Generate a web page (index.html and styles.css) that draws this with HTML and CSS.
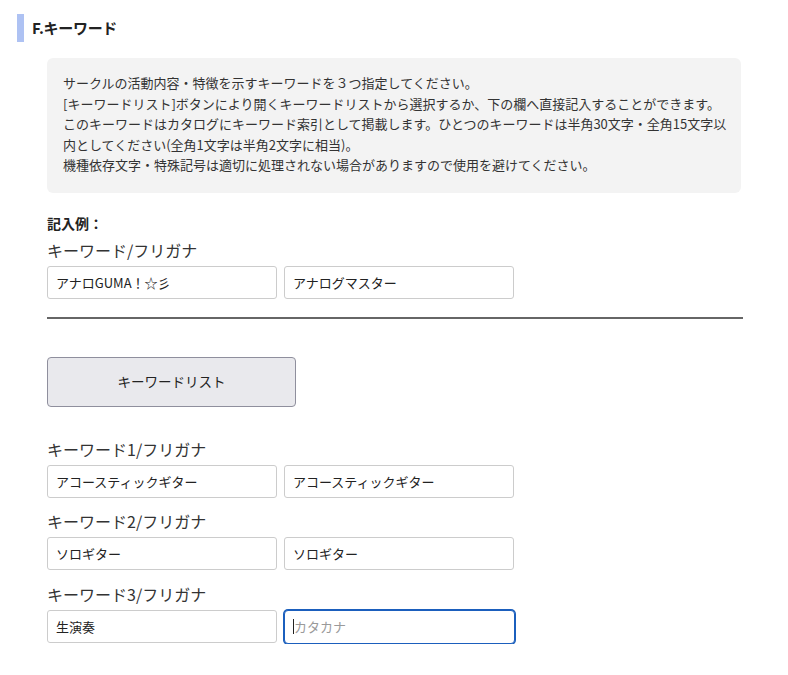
FILE: index.html
```html
<!DOCTYPE html>
<html lang="ja">
<head>
<meta charset="utf-8">
<title>F.キーワード</title>
<link rel="stylesheet" href="styles.css">
</head>
<body>
<div class="page">
  <h2 class="section-title">F.キーワード</h2>
  <div class="content">
    <div class="info-box">
      サークルの活動内容・特徴を示すキーワードを３つ指定してください。<br>
      [キーワードリスト]ボタンにより開くキーワードリストから選択するか、下の欄へ直接記入することができます。<br>
      このキーワードはカタログにキーワード索引として掲載します。ひとつのキーワードは半角30文字・全角15文字以<br>
      内としてください(全角1文字は半角2文字に相当)。<br>
      機種依存文字・特殊記号は適切に処理されない場合がありますので使用を避けてください。
    </div>

    <div class="example-title">記入例：</div>
    <div class="field field-example">
      <div class="field-label">キーワード/フリガナ</div>
      <div class="field-row">
        <input class="text-input" type="text" value="アナロGUMA！☆彡" readonly>
        <input class="text-input" type="text" value="アナログマスター" readonly>
      </div>
    </div>

    <div class="divider"></div>

    <button class="list-button" type="button">キーワードリスト</button>

    <div class="keywords">
      <div class="field">
        <div class="field-label">キーワード1/フリガナ</div>
        <div class="field-row">
          <input class="text-input" type="text" value="アコースティックギター">
          <input class="text-input" type="text" value="アコースティックギター">
        </div>
      </div>
      <div class="field">
        <div class="field-label">キーワード2/フリガナ</div>
        <div class="field-row">
          <input class="text-input" type="text" value="ソロギター">
          <input class="text-input" type="text" value="ソロギター">
        </div>
      </div>
      <div class="field field-last">
        <div class="field-label">キーワード3/フリガナ</div>
        <div class="field-row">
          <input class="text-input" type="text" value="生演奏">
          <div class="text-input focused"><span class="caret"></span><span class="placeholder">カタカナ</span></div>
        </div>
      </div>
    </div>
  </div>
</div>
</body>
</html>
```

FILE: styles.css
```css
* {
  box-sizing: border-box;
}

html, body {
  margin: 0;
  padding: 0;
  background: #ffffff;
}

body {
  font-family: "Noto Sans CJK JP", "Noto Sans", "Liberation Sans", sans-serif;
  color: #333333;
}

.page {
  padding: 14px 0 0 17px;
}

.section-title {
  margin: 0;
  height: 28px;
  line-height: 28px;
  border-left: 7px solid #aec2f3;
  padding-left: 8px;
  font-size: 15px;
  font-weight: 700;
  color: #222222;
  letter-spacing: -0.3px;
}

.content {
  margin-left: 30px;
  width: 696px;
}

.info-box {
  margin-top: 16px;
  width: 694px;
  background: #f3f3f3;
  border-radius: 6px;
  padding: 15px 8px 17px 16px;
  font-size: 13px;
  line-height: 20.6px;
  color: #333333;
  white-space: nowrap;
}

.example-title {
  margin-top: 20px;
  font-size: 14px;
  font-weight: 700;
  line-height: 20px;
  color: #222222;
}

.field-example {
  margin-top: 5px;
}

.field + .field {
  margin-top: 11px;
}

.field.field-last {
  margin-top: 12px;
}

.field-label {
  font-size: 16px;
  line-height: 24px;
  margin-bottom: 4px;
  color: #333333;
}

.field-row {
  display: flex;
  gap: 7px;
}

.text-input {
  width: 230px;
  height: 33px;
  border: 1px solid #cccccc;
  border-radius: 3px;
  padding: 0 8px;
  font-family: "Noto Sans CJK JP", "Noto Sans", "Liberation Sans", sans-serif;
  font-size: 13px;
  color: #222222;
  background: #ffffff;
  outline: none;
  margin: 0;
}

.text-input.focused {
  display: flex;
  align-items: center;
  width: 231px;
  height: 34px;
  border: 1px solid #1b5fbd;
  box-shadow: 0 0 0 1px #1b5fbd;
  border-radius: 4px;
  padding-left: 8px;
}

.caret {
  display: inline-block;
  width: 1px;
  height: 15px;
  background: #222222;
}

.placeholder {
  color: #9a9a9a;
  font-size: 13px;
}

.divider {
  margin-top: 18px;
  height: 2px;
  background: #666666;
}

.list-button {
  display: block;
  margin-top: 38px;
  width: 249px;
  height: 50px;
  background: #e9e9ed;
  border: 1px solid #8f8f9d;
  border-radius: 4px;
  font-family: "Noto Sans CJK JP", "Noto Sans", "Liberation Sans", sans-serif;
  font-size: 13.5px;
  color: #222222;
  padding: 0 0 2px 0;
}

.keywords {
  margin-top: 30px;
}
```
